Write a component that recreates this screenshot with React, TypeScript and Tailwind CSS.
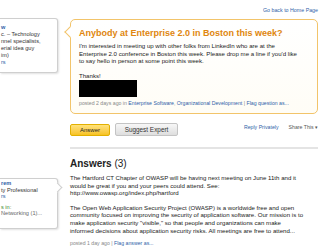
import type { JSX } from 'react'

const FONT = { fontFamily: '"Liberation Sans", Arial, sans-serif' }

function SideCardTop(): JSX.Element {
  return (
    <div className="mt-[18px] h-[55px] w-[58px] rounded-r-[3px] border border-l-0 border-[#cfcfcf] bg-white pl-[1px] pt-[5px] text-[5.6px] leading-[7px] text-[#333] shadow-[1px_1px_2px_rgba(0,0,0,0.12)] whitespace-nowrap overflow-hidden">
      <div className="font-bold text-[#2f5fa8]">w</div>
      <div>c. – Technology</div>
      <div>nnel specialists,</div>
      <div>erial idea guy</div>
      <div>im)</div>
      <div className="text-[#2f5fa8]">rs</div>
    </div>
  )
}

function SideCardBottom(): JSX.Element {
  return (
    <div className="relative mt-[105px] h-[51px] w-[58px] rounded-r-[3px] border border-l-0 border-[#cfcfcf] bg-white pl-[1px] pt-[1px] text-[5.6px] leading-[6.5px] text-[#333] shadow-[1px_1px_2px_rgba(0,0,0,0.12)] whitespace-nowrap">
      <span className="absolute right-[-4px] top-[5px] h-[7px] w-[7px] rotate-45 border-r border-t border-[#cfcfcf] bg-white" />
      <div className="font-bold text-[#2f5fa8]">rem</div>
      <div>ty Professional</div>
      <div className="text-[#2f5fa8]">rs</div>
      <div className="mt-[4px] text-[#3c8a2e]">s in:</div>
      <div className="text-[#666]">Networking (1)...</div>
    </div>
  )
}

export default function App(): JSX.Element {
  return (
    <div className="h-[251px] w-[320px] overflow-hidden bg-white" style={FONT}>
      <div className="flex">
        <div className="w-[70px] shrink-0">
          <SideCardTop />
          <SideCardBottom />
        </div>
        <div className="w-[248px] shrink-0">
          <div className="flex h-[18px] items-start justify-end pt-[7px] text-[5.3px] leading-[6px] text-[#2f5fa8]">
            Go back to Home Page
          </div>
          <div className="relative mt-[1px] h-[95px] rounded-[5px] border border-[#f2c46a] bg-gradient-to-b from-white to-[#fffdf6] pl-[8px] pr-[1px] pt-[8px]">
            <span className="absolute left-[-5px] top-[8px] h-[8px] w-[8px] rotate-45 border-b border-l border-[#f2c46a] bg-white" />
            <div className="text-[9px] font-bold leading-[11px] text-[#e0860e]">
              Anybody at Enterprise 2.0 in Boston this week?
            </div>
            <div className="mt-[3px] whitespace-nowrap text-[6.1px] leading-[7.6px] text-[#222]">
              <div>I'm interested in meeting up with other folks from LinkedIn who are at the</div>
              <div>Enterprise 2.0 conference in Boston this week. Please drop me a line if you'd like</div>
              <div>to say hello in person at some point this week.</div>
              <div className="mt-[7px]">Thanks!</div>
            </div>
            <div className="mt-[1px] h-[17px] w-[58px] bg-black" />
            <div className="mt-[3px] whitespace-nowrap text-[5.2px] leading-[7px] text-[#888]">
              posted 2 days ago in{' '}
              <span className="text-[#2f5fa8]">Enterprise Software</span>,{' '}
              <span className="text-[#2f5fa8]">Organizational Development</span> |{' '}
              <span className="text-[#2f5fa8]">Flag question as...</span>
            </div>
          </div>
          <div className="mt-[9px] flex items-center">
            <button className="h-[12px] w-[40px] rounded-[2px] border border-[#e2b000] bg-gradient-to-b from-[#ffe27a] to-[#f7c21c] text-[6px] leading-[10px] text-[#222]">
              Answer
            </button>
            <button className="ml-[5px] h-[13px] w-[63px] rounded-[2px] border border-[#c4c4c4] bg-gradient-to-b from-[#f7f7f7] to-[#dedede] text-[6.4px] leading-[11px] text-[#333]">
              Suggest Expert
            </button>
            <div className="ml-auto flex items-center pb-[3px] text-[5.2px] text-[#2f5fa8]">
              <span>Reply Privately</span>
              <span className="ml-[10px] text-[#555]">Share This ▾</span>
            </div>
          </div>
          <div className="mt-[11px] h-[2px] bg-[#e4e4e4]" />
          <div className="mt-[9px] text-[10px] leading-[11px] text-[#222]">
            <span className="font-bold">Answers</span> (3)
          </div>
          <div className="mt-[5px] whitespace-nowrap text-[6.1px] leading-[7.6px] text-[#222]">
            <div>The Hartford CT Chapter of OWASP will be having next meeting on June 11th and it</div>
            <div>would be great if you and your peers could attend. See:</div>
            <div>http://www.owasp.org/index.php/hartford</div>
            <div className="mt-[7px]">
              The Open Web Application Security Project (OWASP) is a worldwide free and open
            </div>
            <div>community focused on improving the security of application software. Our mission is to</div>
            <div>make application security "visible," so that people and organizations can make</div>
            <div>informed decisions about application security risks. All meetings are free to attend...</div>
          </div>
          <div className="mt-[6px] whitespace-nowrap text-[5.2px] leading-[7px] text-[#888]">
            posted 1 day ago | <span className="text-[#2f5fa8]">Flag answer as...</span>
          </div>
        </div>
      </div>
    </div>
  )
}
